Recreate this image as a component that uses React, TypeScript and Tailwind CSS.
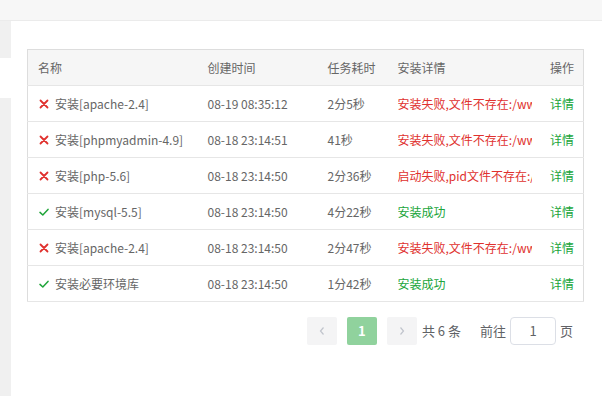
import React from 'react';

type Row = {
  ok: boolean;
  name: string;
  time: string;
  cost: string;
  detail: string;
};

const rows: Row[] = [
  { ok: false, name: '安装[apache-2.4]', time: '08-19 08:35:12', cost: '2分5秒', detail: '安装失败,文件不存在:/www/server/apache/bin/httpd' },
  { ok: false, name: '安装[phpmyadmin-4.9]', time: '08-18 23:14:51', cost: '41秒', detail: '安装失败,文件不存在:/www/server/phpmyadmin' },
  { ok: false, name: '安装[php-5.6]', time: '08-18 23:14:50', cost: '2分36秒', detail: '启动失败,pid文件不存在:/www/server/php/56/var/run' },
  { ok: true, name: '安装[mysql-5.5]', time: '08-18 23:14:50', cost: '4分22秒', detail: '安装成功' },
  { ok: false, name: '安装[apache-2.4]', time: '08-18 23:14:50', cost: '2分47秒', detail: '安装失败,文件不存在:/www/server/apache/bin/httpd' },
  { ok: true, name: '安装必要环境库', time: '08-18 23:14:50', cost: '1分42秒', detail: '安装成功' },
];

const font = { fontFamily: '"Noto Sans CJK SC", "Noto Sans", sans-serif' };

const FailIcon = () => (
  <svg width="10" height="10" viewBox="0 0 10 10" className="shrink-0">
    <path d="M1.5 1.5 L8.5 8.5 M8.5 1.5 L1.5 8.5" stroke="#e0312e" strokeWidth="1.8" strokeLinecap="round" />
  </svg>
);

const OkIcon = () => (
  <svg width="10" height="10" viewBox="0 0 10 10" className="shrink-0">
    <path d="M1 5.4 L3.8 8 L9 2.4" stroke="#20a53a" strokeWidth="1.5" fill="none" strokeLinecap="round" strokeLinejoin="round" />
  </svg>
);

export default function App() {
  return (
    <div className="w-[602px] h-[396px] flex flex-col bg-white overflow-hidden" style={font}>
      {/* top bar */}
      <div className="h-[21px] shrink-0 bg-[#f7f7f7] border-b border-[#ebebeb]" />

      <div className="flex flex-1 min-h-0">
        {/* left strip */}
        <div className="w-[11px] shrink-0 flex flex-col">
          <div className="h-[37px] bg-[#f0f0f0]" />
          <div className="h-[40px] bg-white" />
          <div className="flex-1 bg-[#f0f0f0]" />
        </div>

        {/* content */}
        <div className="flex-1 pl-[16px] pr-[18px] pt-[28px]">
          <table className="w-full table-fixed border-collapse border border-[#dddddd] text-[12px] text-[#666]">
            <colgroup>
              <col className="w-[170px]" />
              <col className="w-[120px]" />
              <col className="w-[70px]" />
              <col className="w-[154px]" />
              <col />
            </colgroup>
            <thead>
              <tr className="h-[36px] bg-[#f6f6f6] border-b border-[#e6e6e6]">
                <th className="font-normal text-left pl-[10px]">名称</th>
                <th className="font-normal text-left pl-[10px]">创建时间</th>
                <th className="font-normal text-left pl-[10px]">任务耗时</th>
                <th className="font-normal text-left pl-[10px]">安装详情</th>
                <th className="font-normal text-right pr-[9px]">操作</th>
              </tr>
            </thead>
            <tbody>
              {rows.map((r, i) => (
                <tr key={i} className="h-[36px] border-b border-[#e6e6e6]">
                  <td className="pl-[11px]">
                    <div className="flex items-center gap-[6px] whitespace-nowrap">
                      {r.ok ? <OkIcon /> : <FailIcon />}
                      <span>{r.name}</span>
                    </div>
                  </td>
                  <td className="pl-[10px] whitespace-nowrap">{r.time}</td>
                  <td className="pl-[10px] whitespace-nowrap">{r.cost}</td>
                  <td className="pl-[10px] pr-[10px]">
                    <div className={`overflow-hidden whitespace-nowrap ${r.ok ? 'text-[#20a53a]' : 'text-[#e0312e]'}`}>
                      {r.detail}
                    </div>
                  </td>
                  <td className="text-right pr-[9px] text-[#20a53a] whitespace-nowrap">详情</td>
                </tr>
              ))}
            </tbody>
          </table>

          {/* pagination */}
          <div className="flex justify-end items-center mt-[15px] pr-[11px] text-[13px] text-[#606266]">
            <button className="w-[30px] h-[28px] rounded-[2px] bg-[#f4f4f5] flex items-center justify-center">
              <svg width="8" height="10" viewBox="0 0 8 10">
                <path d="M5.5 1.5 L2.5 5 L5.5 8.5" stroke="#c0c4cc" strokeWidth="1.2" fill="none" />
              </svg>
            </button>
            <button className="w-[30px] h-[28px] ml-[10px] rounded-[2px] bg-[#90d29d] text-white font-bold text-[13px] flex items-center justify-center">
              1
            </button>
            <button className="w-[30px] h-[28px] ml-[10px] rounded-[2px] bg-[#f4f4f5] flex items-center justify-center">
              <svg width="8" height="10" viewBox="0 0 8 10">
                <path d="M2.5 1.5 L5.5 5 L2.5 8.5" stroke="#c0c4cc" strokeWidth="1.2" fill="none" />
              </svg>
            </button>
            <span className="ml-[5px]">共 6 条</span>
            <span className="ml-[19px]">前往</span>
            <div className="ml-[4px] w-[46px] h-[28px] border border-[#dcdfe6] rounded-[4px] flex items-center justify-center">
              1
            </div>
            <span className="ml-[4px]">页</span>
          </div>
        </div>
      </div>
    </div>
  );
}
